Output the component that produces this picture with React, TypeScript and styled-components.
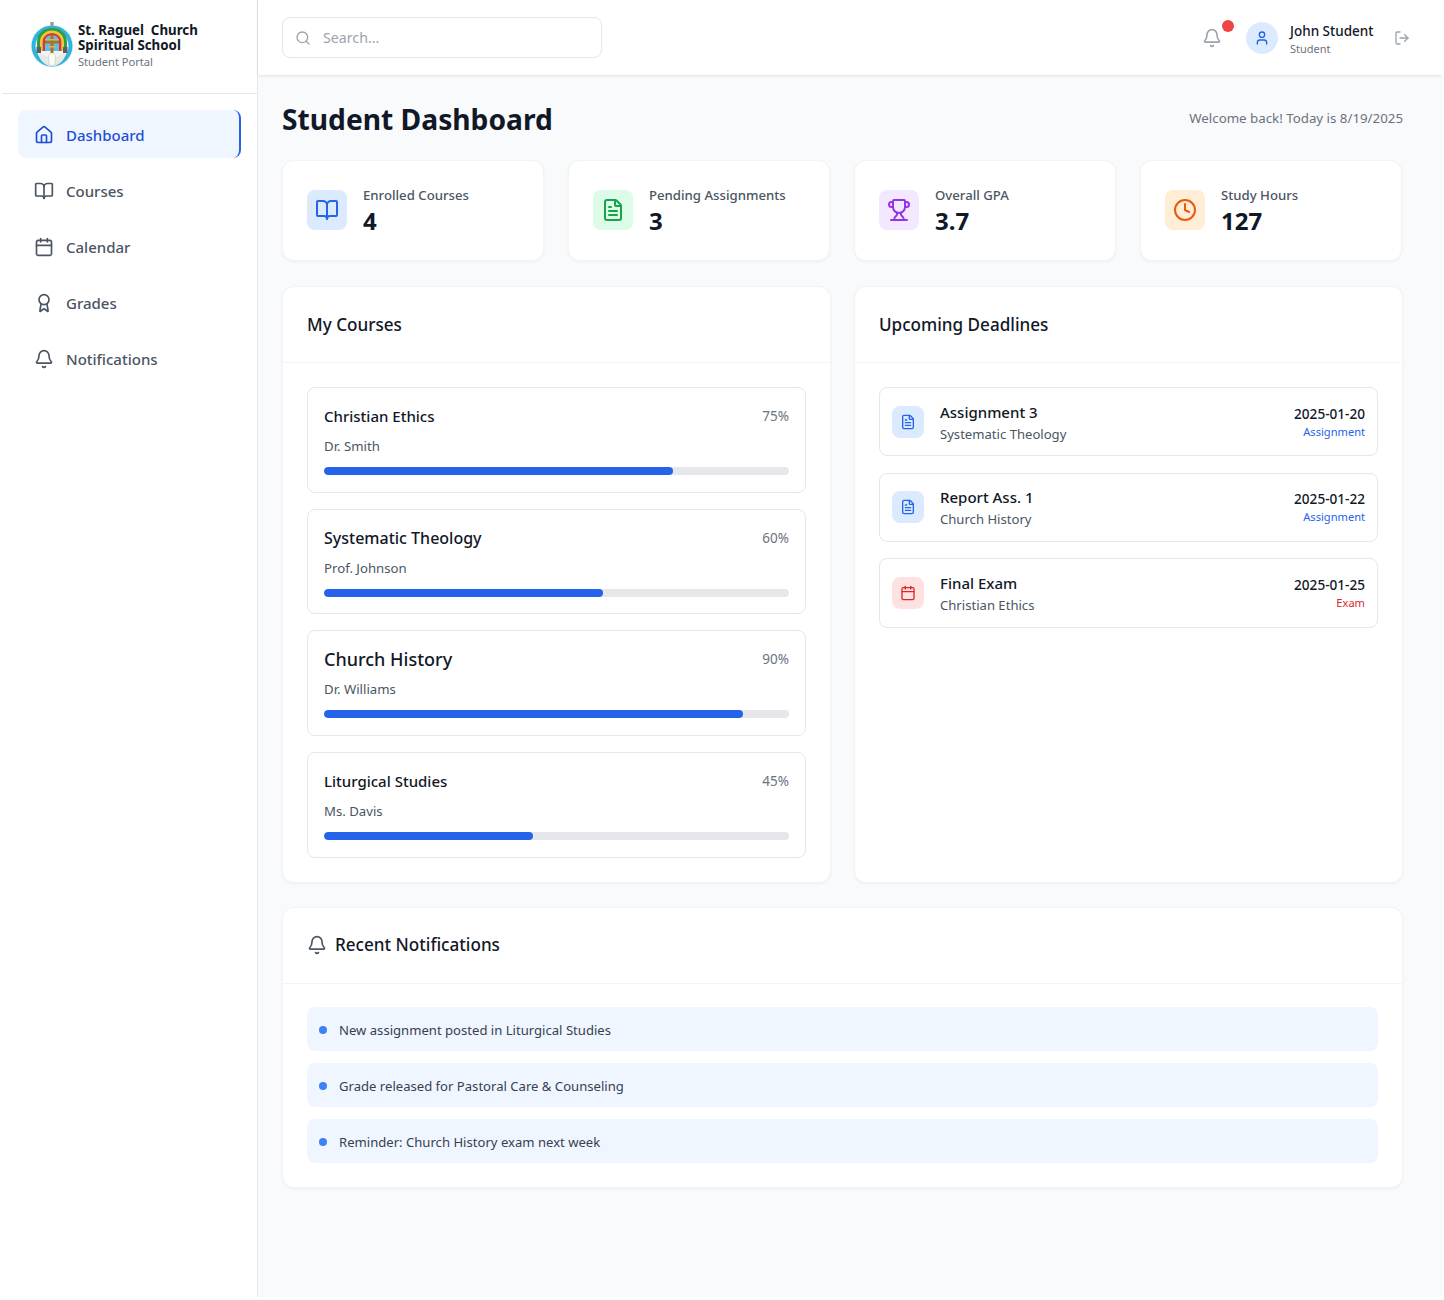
import React from "react";
import styled, { createGlobalStyle } from "styled-components";
import { Award, Bell, BookOpen, Calendar, Clock, FileText, House, LogOut, Search, Trophy, User } from "lucide-react";

const Global = createGlobalStyle`
  html, body { margin: 0; padding: 0; background: #fff; }
  body { font-family: "Noto Sans", "Open Sans", sans-serif; color: #111827; }
  * { box-sizing: border-box; }
`;

const Shell = styled.div`
  display: flex;
  width: 1442px;
  height: 1297px;
  background: #f9fafb;
  overflow: hidden;
`;

const Sidebar = styled.aside`
  width: 258px;
  flex: none;
  background: #fff;
  border-right: 1px solid #e5e7eb;
`;

const Brand = styled.div`
  height: 94px;
  margin-left: 2px;
  padding: 22px 0 0 28px;
  display: flex;
  gap: 2px;
  border-bottom: 1px solid #e5e7eb;
`;

const BrandText = styled.div`
  display: flex;
  flex-direction: column;
  padding-top: 1px;
`;

const BrandName = styled.div`
  font-size: 13.3px;
  line-height: 15px;
  font-weight: 700;
  color: #111827;
  white-space: pre;
`;

const BrandSub = styled.div`
  font-size: 11.1px;
  line-height: 18px;
  color: #6b7280;
`;

const Nav = styled.nav`
  padding: 16px 16px 0 18px;
  display: flex;
  flex-direction: column;
  gap: 8px;
`;

const NavItem = styled.div<{ $active?: boolean }>`
  height: 48px;
  display: flex;
  align-items: center;
  gap: 12px;
  padding: 1px 0 0 16px;
  border-radius: 8px;
  font-size: 15px;
  font-weight: 500;
  color: ${(p) => (p.$active ? "#1d4ed8" : "#4b5563")};
  background: ${(p) => (p.$active ? "#eff6ff" : "transparent")};
  border-right: 2px solid ${(p) => (p.$active ? "#2563eb" : "transparent")};
`;

const Column = styled.div`
  flex: 1;
  min-width: 0;
  display: flex;
  flex-direction: column;
`;

const Header = styled.header`
  height: 75px;
  flex: none;
  background: #fff;
  box-shadow: 0 1px 3px rgba(0, 0, 0, 0.1);
  display: flex;
  align-items: center;
  padding: 0 32px 0 24px;
`;

const SearchBox = styled.div`
  width: 320px;
  height: 41px;
  display: flex;
  align-items: center;
  gap: 12px;
  padding-left: 12px;
  border: 1px solid #e5e7eb;
  border-radius: 8px;
  font-size: 14.2px;
  color: #9ca3af;
`;

const HeaderRight = styled.div`
  margin-left: auto;
  display: flex;
  align-items: center;
`;

const BellWrap = styled.div`
  position: relative;
  display: flex;
  color: #9ca3af;
  margin-right: 24px;
`;

const RedDot = styled.span`
  position: absolute;
  top: -8px;
  right: -12px;
  width: 12px;
  height: 12px;
  border-radius: 50%;
  background: #ef4444;
`;

const Avatar = styled.div`
  width: 32px;
  height: 32px;
  border-radius: 50%;
  background: #dbeafe;
  color: #2563eb;
  display: flex;
  align-items: center;
  justify-content: center;
  margin-right: 12px;
`;

const UserInfo = styled.div`
  width: 104px;
  padding-top: 2px;
`;

const UserName = styled.div`
  font-size: 13.5px;
  line-height: 20px;
  font-weight: 500;
  color: #111827;
`;

const UserRole = styled.div`
  font-size: 11px;
  line-height: 16px;
  color: #6b7280;
`;

const Main = styled.main`
  padding: 24px 39px 0 24px;
`;

const TitleRow = styled.div`
  height: 61px;
  display: flex;
  align-items: flex-start;
  justify-content: space-between;
`;

const Title = styled.h1`
  margin: 1px 0 0;
  font-size: 28.2px;
  line-height: 38px;
  font-weight: 700;
  color: #111827;
`;

const Welcome = styled.div`
  font-size: 13.3px;
  line-height: 20px;
  color: #6b7280;
  margin-top: 9px;
`;

const Stats = styled.div`
  display: grid;
  grid-template-columns: repeat(4, 262.3px);
  gap: 23.7px;
  margin-bottom: 25px;
`;

const Card = styled.section`
  background: #fff;
  border: 1px solid #f3f4f6;
  border-radius: 12px;
  box-shadow: 0 1px 3px rgba(0, 0, 0, 0.05);
`;

const StatCard = styled(Card)`
  height: 101px;
  display: flex;
  align-items: center;
  gap: 16px;
  padding: 0 0 1px 24px;
`;

const StatText = styled.div`
  margin-top: 2px;
`;

const IconTile = styled.div<{ $bg: string; $fg: string; $size: number }>`
  width: ${(p) => p.$size}px;
  height: ${(p) => p.$size}px;
  flex: none;
  border-radius: 8px;
  background: ${(p) => p.$bg};
  color: ${(p) => p.$fg};
  display: flex;
  align-items: center;
  justify-content: center;
`;

const StatLabel = styled.div`
  font-size: 13.2px;
  line-height: 20px;
  font-weight: 500;
  color: #4b5563;
`;

const StatValue = styled.div`
  font-size: 24px;
  line-height: 32px;
  font-weight: 700;
  color: #111827;
`;

const Panels = styled.div`
  display: grid;
  grid-template-columns: 1fr 1fr;
  gap: 23px;
  margin-bottom: 24px;
`;

const PanelHead = styled.div`
  height: 76px;
  display: flex;
  align-items: center;
  gap: 8px;
  padding-left: 24px;
  border-bottom: 1px solid #f3f4f6;
`;

const PanelTitle = styled.h2`
  margin: 0;
  font-size: 17.1px;
  line-height: 28px;
  font-weight: 500;
  color: #111827;
`;

const PanelBody = styled.div<{ $gap: number; $top: number }>`
  padding: ${(p) => p.$top}px 24px 24px;
  display: flex;
  flex-direction: column;
  gap: ${(p) => p.$gap}px;
`;

const Course = styled.div`
  height: 105.7px;
  border: 1px solid #e5e7eb;
  border-radius: 8px;
  padding: 16px;
`;

const CourseTop = styled.div`
  height: 24px;
  display: flex;
  align-items: center;
  justify-content: space-between;
`;

const CourseName = styled.div<{ $size: number }>`
  font-size: ${(p) => p.$size}px;
  font-weight: 500;
  color: #111827;
`;

const Percent = styled.div`
  font-size: 13.5px;
  color: #6b7280;
`;

const Teacher = styled.div`
  font-size: 13.2px;
  line-height: 20px;
  color: #4b5563;
  margin-top: 8px;
`;

const Track = styled.div`
  height: 8px;
  border-radius: 4px;
  background: #e5e7eb;
  margin-top: 11px;
  overflow: hidden;
`;

const Fill = styled.div`
  height: 100%;
  border-radius: 4px;
  background: #2563eb;
`;

const Deadline = styled.div`
  height: 69.4px;
  border: 1px solid #e5e7eb;
  border-radius: 8px;
  padding: 0 12px;
  display: flex;
  align-items: center;
  gap: 16px;
`;

const DeadlineText = styled.div`
  flex: 1;
`;

const DeadlineName = styled.div`
  font-size: 15px;
  line-height: 24px;
  font-weight: 500;
  color: #111827;
`;

const DeadlineCourse = styled.div`
  font-size: 13.1px;
  line-height: 20px;
  color: #4b5563;
`;

const DeadlineMeta = styled.div`
  text-align: right;
`;

const DueDate = styled.div`
  font-size: 13.6px;
  line-height: 20px;
  font-weight: 500;
  color: #111827;
`;

const DueKind = styled.div<{ $color: string }>`
  font-size: 11.1px;
  line-height: 16px;
  color: ${(p) => p.$color};
`;

const NotifIcon = styled.span`
  display: flex;
  color: #4b5563;
`;

const Notice = styled.div`
  height: 44px;
  border-radius: 8px;
  background: #eff6ff;
  display: flex;
  align-items: center;
  gap: 12px;
  padding: 2px 0 0 12px;
  font-size: 13.1px;
  color: #374151;
`;

const Dot = styled.span`
  width: 8px;
  height: 8px;
  margin-top: 1px;
  border-radius: 50%;
  background: #3b82f6;
`;

const LogoMark = () => (
  <svg width="46" height="48" viewBox="0 1 46 48" style={{ flex: "none" }}>
    <circle cx="22" cy="25" r="21.500" fill="#f2f5f4" />
    <circle cx="22" cy="25" r="20.500" fill="#2fb4dd" />
    <circle cx="22" cy="25" r="16.500" fill="#eef6f6" />
    <path d="M7 30V21C7 12 14 7 22 7s15 5 15 14v9h-3.500v-9C33.500 14 28 10 22 10s-11.500 4-11.500 11v9z" fill="#2f9e44" />
    <path d="M10 30V21C10 14 16 9.500 22 9.500S34 14 34 21v9h-2.500v-9C31.500 15.500 27 12 22 12s-9.500 3.500-9.500 9v9z" fill="#efc92d" />
    <path d="M12.500 30V21C12.500 15.500 17 12 22 12s9.500 3.500 9.500 9v9H29v-9c0-4-3-6.500-7-6.500S15 17 15 21v9z" fill="#d93a2f" />
    <path d="M15 30V21c0-4 3-6.500 7-6.500S29 17 29 21v9z" fill="#5cc0e4" />
    <path d="M20.500 14h3v5.500H29v3h-5.500V33h-3V22.500H15v-3h5.500z" fill="#a9722d" />
    <path d="M16.500 18h11v1.500h-11zM18 25h8v1.500h-8z" fill="#d9b25a" />
    <rect x="6.500" y="26" width="4.500" height="6" fill="#5a6068" />
    <rect x="33" y="26" width="4.500" height="6" fill="#5a6068" />
    <path d="M8 33c4 0 7 1 10 3l4 2 4-2c3-2 6-3 10-3-1.500 5-5 9-9 11l-2 1h-6l-2-1c-4-2-7.500-6-9-11z" fill="#e9e9e4" />
    <path d="M18.500 34.500c1-2 2-2.500 3.500-2.500s2.500.5 3.500 2.500l-.5 9c-1 1.500-5 1.500-6 0z" fill="#fbfbf6" stroke="#bdbdb6" strokeWidth=".5" />
    <rect x="20.300" y="0" width="3.400" height="5.500" rx="1.500" fill="#9b9c96" />
  </svg>
);

const navItems = [
  { label: "Dashboard", icon: House, active: true },
  { label: "Courses", icon: BookOpen },
  { label: "Calendar", icon: Calendar },
  { label: "Grades", icon: Award },
  { label: "Notifications", icon: Bell },
];

const stats = [
  { label: "Enrolled Courses", value: "4", icon: BookOpen, bg: "#dbeafe", fg: "#2563eb" },
  { label: "Pending Assignments", value: "3", icon: FileText, bg: "#dcfce7", fg: "#16a34a" },
  { label: "Overall GPA", value: "3.7", icon: Trophy, bg: "#f3e8ff", fg: "#9333ea" },
  { label: "Study Hours", value: "127", icon: Clock, bg: "#ffedd5", fg: "#ea580c" },
];

const courses = [
  { name: "Christian Ethics", teacher: "Dr. Smith", pct: 75, size: 15 },
  { name: "Systematic Theology", teacher: "Prof. Johnson", pct: 60, size: 16 },
  { name: "Church History", teacher: "Dr. Williams", pct: 90, size: 18 },
  { name: "Liturgical Studies", teacher: "Ms. Davis", pct: 45, size: 15 },
];

const deadlines = [
  { name: "Assignment 3", course: "Systematic Theology", date: "2025-01-20", kind: "Assignment", color: "#2563eb", bg: "#dbeafe", icon: FileText },
  { name: "Report Ass. 1", course: "Church History", date: "2025-01-22", kind: "Assignment", color: "#2563eb", bg: "#dbeafe", icon: FileText },
  { name: "Final Exam", course: "Christian Ethics", date: "2025-01-25", kind: "Exam", color: "#dc2626", bg: "#fee2e2", icon: Calendar },
];

const notices = [
  "New assignment posted in Liturgical Studies",
  "Grade released for Pastoral Care & Counseling",
  "Reminder: Church History exam next week",
];

export default function App() {
  return (
    <Shell>
      <Global />
      <Sidebar>
        <Brand>
          <LogoMark />
          <BrandText>
            <BrandName>{"St. Raguel  Church\nSpiritual School"}</BrandName>
            <BrandSub>Student Portal</BrandSub>
          </BrandText>
        </Brand>
        <Nav>
          {navItems.map((n) => (
            <NavItem key={n.label} $active={n.active}>
              <n.icon size={20} />
              {n.label}
            </NavItem>
          ))}
        </Nav>
      </Sidebar>
      <Column>
        <Header>
          <SearchBox>
            <Search size={16} />
            Search...
          </SearchBox>
          <HeaderRight>
            <BellWrap>
              <Bell size={20} />
              <RedDot />
            </BellWrap>
            <Avatar>
              <User size={16} />
            </Avatar>
            <UserInfo>
              <UserName>John Student</UserName>
              <UserRole>Student</UserRole>
            </UserInfo>
            <LogOut size={16} color="#9ca3af" />
          </HeaderRight>
        </Header>
        <Main>
          <TitleRow>
            <Title>Student Dashboard</Title>
            <Welcome>Welcome back! Today is 8/19/2025</Welcome>
          </TitleRow>
          <Stats>
            {stats.map((s) => (
              <StatCard key={s.label}>
                <IconTile $bg={s.bg} $fg={s.fg} $size={40}>
                  <s.icon size={24} />
                </IconTile>
                <StatText>
                  <StatLabel>{s.label}</StatLabel>
                  <StatValue>{s.value}</StatValue>
                </StatText>
              </StatCard>
            ))}
          </Stats>
          <Panels>
            <Card>
              <PanelHead>
                <PanelTitle>My Courses</PanelTitle>
              </PanelHead>
              <PanelBody $gap={16} $top={24}>
                {courses.map((c) => (
                  <Course key={c.name}>
                    <CourseTop>
                      <CourseName $size={c.size}>{c.name}</CourseName>
                      <Percent>{c.pct}%</Percent>
                    </CourseTop>
                    <Teacher>{c.teacher}</Teacher>
                    <Track>
                      <Fill style={{ width: `${c.pct}%` }} />
                    </Track>
                  </Course>
                ))}
              </PanelBody>
            </Card>
            <Card>
              <PanelHead>
                <PanelTitle>Upcoming Deadlines</PanelTitle>
              </PanelHead>
              <PanelBody $gap={16.3} $top={24}>
                {deadlines.map((d) => (
                  <Deadline key={d.name}>
                    <IconTile $bg={d.bg} $fg={d.color} $size={32}>
                      <d.icon size={16} />
                    </IconTile>
                    <DeadlineText>
                      <DeadlineName>{d.name}</DeadlineName>
                      <DeadlineCourse>{d.course}</DeadlineCourse>
                    </DeadlineText>
                    <DeadlineMeta>
                      <DueDate>{d.date}</DueDate>
                      <DueKind $color={d.color}>{d.kind}</DueKind>
                    </DeadlineMeta>
                  </Deadline>
                ))}
              </PanelBody>
            </Card>
          </Panels>
          <Card>
            <PanelHead>
              <NotifIcon>
                <Bell size={20} />
              </NotifIcon>
              <PanelTitle>Recent Notifications</PanelTitle>
            </PanelHead>
            <PanelBody $gap={12} $top={23}>
              {notices.map((n) => (
                <Notice key={n}>
                  <Dot />
                  {n}
                </Notice>
              ))}
            </PanelBody>
          </Card>
        </Main>
      </Column>
    </Shell>
  );
}
